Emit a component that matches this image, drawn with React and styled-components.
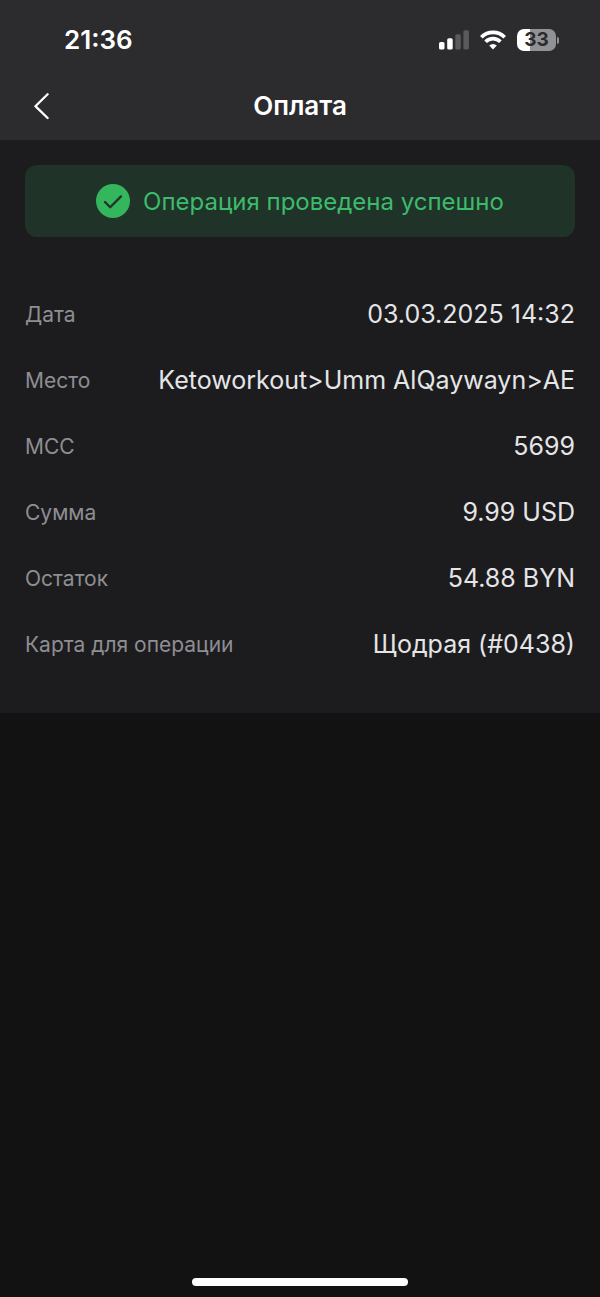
import styled, { createGlobalStyle } from "styled-components";

const GlobalStyle = createGlobalStyle`
  * {
    box-sizing: border-box;
  }
  body {
    margin: 0;
    background: #121212;
    font-family: Inter, "Liberation Sans", sans-serif;
  }
`;

const Page = styled.div`
  display: flex;
  flex-direction: column;
  min-height: 100vh;
`;

const Top = styled.header`
  background: #2c2c2e;
  color: #ffffff;
`;

const StatusBar = styled.div`
  display: flex;
  justify-content: space-between;
  align-items: center;
  height: 72px;
  padding: 8px 41px 0 64px;
`;

const Time = styled.time`
  font-size: 26px;
  font-weight: 600;
  line-height: 30px;
`;

const StatusIcons = styled.div`
  display: flex;
  align-items: center;
  gap: 11px;
`;

const BatteryBox = styled.div`
  display: flex;
  align-items: center;
  gap: 1px;
`;

const BatteryBody = styled.div`
  width: 39px;
  height: 22px;
  border-radius: 7px;
  background: linear-gradient(
    to right,
    #ffffff ${({ $level }) => $level}%,
    #929294 ${({ $level }) => $level}%
  );
  color: #2c2c2e;
  font-size: 19px;
  font-weight: 700;
  line-height: 22px;
  text-align: center;
`;

const BatteryTip = styled.div`
  width: 2px;
  height: 7px;
  border-radius: 0 2px 2px 0;
  background: #929294;
`;

const NavBar = styled.nav`
  display: grid;
  grid-template-columns: 48px 1fr 48px;
  align-items: center;
  height: 68px;
  padding: 0 18px;
`;

const BackButton = styled.button`
  display: flex;
  justify-content: center;
  align-items: center;
  height: 48px;
  padding: 0;
  border: 0;
  background: none;
  color: inherit;
  cursor: pointer;
`;

const Title = styled.h1`
  margin: 0;
  font-size: 26px;
  font-weight: 600;
  line-height: 30px;
  text-align: center;
`;

const Details = styled.main`
  padding: 25px 25px 36px;
  background: #1c1c1e;
`;

const Banner = styled.div`
  display: flex;
  justify-content: center;
  align-items: center;
  gap: 13px;
  min-height: 72px;
  margin-bottom: 44px;
  border-radius: 12px;
  background: #203329;
  color: #3dbb6c;
  font-size: 24px;
`;

const List = styled.dl`
  margin: 0;
`;

const Row = styled.div`
  display: flex;
  justify-content: space-between;
  align-items: center;
  gap: 16px;
  min-height: 66px;
`;

const Label = styled.dt`
  color: #8e8e93;
  font-size: 21px;
`;

const Value = styled.dd`
  margin: 0;
  color: #e5e5e7;
  font-size: 25px;
  text-align: right;
`;

const Footer = styled.footer`
  display: flex;
  justify-content: center;
  margin-top: auto;
  padding-bottom: 11px;
`;

const HomeIndicator = styled.div`
  width: 36%;
  height: 8px;
  border-radius: 4px;
  background: #ffffff;
`;

const rows = [
  { label: "Дата", value: "03.03.2025 14:32" },
  { label: "Место", value: "Ketoworkout>Umm AlQaywayn>AE" },
  { label: "MCC", value: "5699" },
  { label: "Сумма", value: "9.99 USD" },
  { label: "Остаток", value: "54.88 BYN" },
  { label: "Карта для операции", value: "Щодрая (#0438)" },
];

const SignalIcon = () => (
  <svg width="30" height="20" viewBox="0 0 30 20" fill="#ffffff">
    <rect x="0" y="12" width="5.5" height="7.5" rx="1.6" />
    <rect x="8.2" y="8.3" width="5.5" height="11.2" rx="1.6" />
    <rect x="16.3" y="4.2" width="5.5" height="15.3" rx="1.6" opacity="0.22" />
    <rect x="24.4" y="0.2" width="5.5" height="19.3" rx="1.6" opacity="0.22" />
  </svg>
);

const WifiIcon = () => (
  <svg width="26" height="20" viewBox="0 0 26 20">
    <g fill="none" stroke="#ffffff" strokeWidth="3.7">
      <path d="M1.3 7.2A16.7 16.7 0 0 1 24.7 7.2" />
      <path d="M5.6 11.8A10.4 10.4 0 0 1 20.4 11.8" />
    </g>
    <path
      d="M9.2 15.6a5.4 5.4 0 0 1 7.6 0L13.5 19a.7.7 0 0 1-1 0Z"
      fill="#ffffff"
    />
  </svg>
);

const BackIcon = () => (
  <svg width="16" height="28" viewBox="0 0 16 28">
    <path
      d="M13.6 2.2 1.4 14.2 13.6 26"
      fill="none"
      stroke="#ffffff"
      strokeWidth="2.3"
      strokeLinecap="round"
      strokeLinejoin="round"
    />
  </svg>
);

const CheckIcon = () => (
  <svg width="34" height="34" viewBox="0 0 34 34">
    <circle cx="17" cy="17" r="17" fill="#34b75c" />
    <path
      d="M9 18 14.2 23.2 25 12.4"
      fill="none"
      stroke="#203329"
      strokeWidth="2.3"
      strokeLinecap="round"
      strokeLinejoin="round"
    />
  </svg>
);

const App = () => {
  return (
    <Page>
      <GlobalStyle />
      <Top>
        <StatusBar>
          <Time>21:36</Time>
          <StatusIcons>
            <SignalIcon />
            <WifiIcon />
            <BatteryBox>
              <BatteryBody $level={33}>33</BatteryBody>
              <BatteryTip />
            </BatteryBox>
          </StatusIcons>
        </StatusBar>
        <NavBar>
          <BackButton type="button" aria-label="Назад">
            <BackIcon />
          </BackButton>
          <Title>Оплата</Title>
        </NavBar>
      </Top>
      <Details>
        <Banner role="status">
          <CheckIcon />
          <span>Операция проведена успешно</span>
        </Banner>
        <List>
          {rows.map((row) => (
            <Row key={row.label}>
              <Label>{row.label}</Label>
              <Value>{row.value}</Value>
            </Row>
          ))}
        </List>
      </Details>
      <Footer>
        <HomeIndicator />
      </Footer>
    </Page>
  );
};

export default App;
